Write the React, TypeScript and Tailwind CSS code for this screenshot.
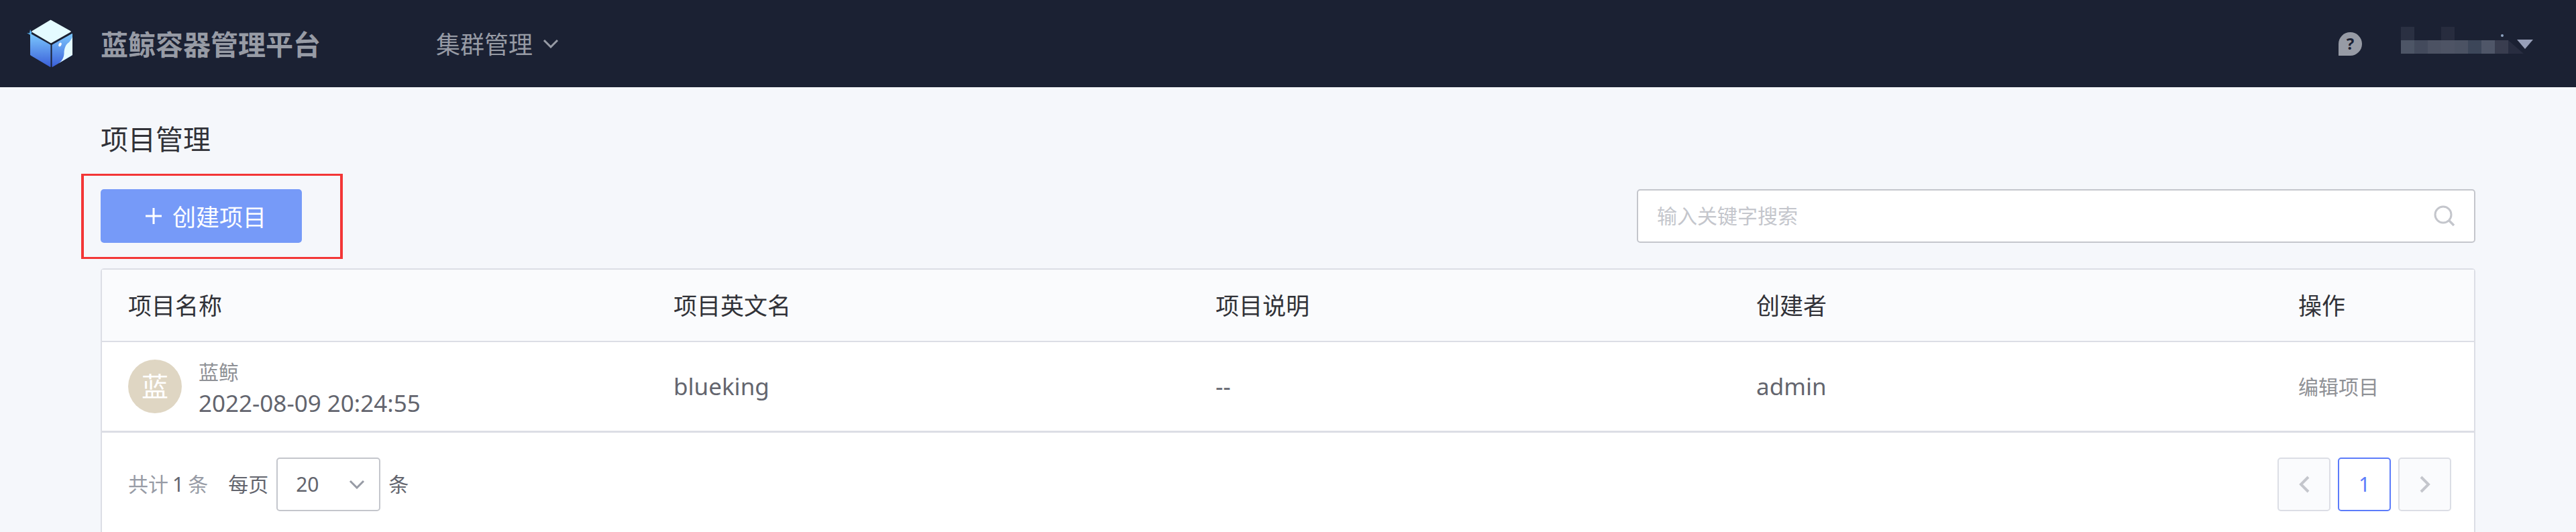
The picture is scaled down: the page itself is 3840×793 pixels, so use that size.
const sans = 'font-["Noto_Sans","Noto_Sans_CJK_SC",sans-serif]';

const blurTop = ['bg-[#2a3042]', 'bg-transparent', 'bg-transparent', 'bg-[#272c3e]'];
const blurBottom = [
  'w-[20px] bg-[#4d5566]',
  'w-[20px] bg-[#434a5c]',
  'w-[20px] bg-[#4c5263]',
  'w-[20px] bg-[#4e5465]',
  'w-[20px] bg-[#4b5263]',
  'w-[20px] bg-[#3c4659]',
  'w-[20px] bg-[#4f5668]',
  'w-[20px] bg-[#393d4f]',
  'w-[23px] bg-[#282d40] [clip-path:polygon(0_0,100%_100%,0_100%)]',
];

const columns = [
  { title: '项目名称', width: 'w-[813px]' },
  { title: '项目英文名', width: 'w-[808px]' },
  { title: '项目说明', width: 'w-[806px]' },
  { title: '创建者', width: 'w-[808px]' },
  { title: '操作', width: 'flex-1' },
];

const Logo = () => (
  <svg width="70" height="74" viewBox="40 28 70 74" className="shrink-0">
    <defs>
      <linearGradient id="face" gradientUnits="userSpaceOnUse" x1="0" y1="50" x2="0" y2="100">
        <stop offset="0%" stopColor="#7cc8fd" />
        <stop offset="100%" stopColor="#3a5fd9" />
      </linearGradient>
    </defs>
    <path d="M75.5 30.5 L105 47 L76 63.5 L48 47 Z" fill="#e4fbff" stroke="#e4fbff" strokeWidth="1.5" strokeLinejoin="round" />
    <path d="M45.5 50.5 L75 67 L75 99.5 L45.5 82 Z" fill="url(#face)" stroke="url(#face)" strokeWidth="1" strokeLinejoin="round" />
    <path d="M78 67 L107.5 50.5 L107.5 82 L78 99.5 Z" fill="url(#face)" stroke="url(#face)" strokeWidth="1" strokeLinejoin="round" />
    <path d="M108 55 L108 82 L88 94 C93 90 95 86 95.5 80 C95.5 72 98 66 103 63 C105 60 107 58 108 55 Z" fill="#e4fbff" />
    <ellipse cx="89.5" cy="66.5" rx="2" ry="3" fill="#ffffff" transform="rotate(25 89.5 66.5)" />
    <path d="M40 49 L44 49.5 L45 44 L47.5 49 L45 52 Z" fill="#5cb4f2" />
  </svg>
);

export default function App() {
  return (
    <div className={`h-[793px] overflow-hidden bg-[#f5f7fb] ${sans}`}>
      {/* header */}
      <header className="flex h-[130px] items-center bg-[#1b2133] pl-[40px] pr-[64px]">
        <Logo />
        <div className="mt-[3px] ml-[40px] w-[500px] text-[41px] leading-none font-bold text-[#979ba5]">蓝鲸容器管理平台</div>
        <div className="mt-[3px] flex items-center text-[36px] leading-none text-[#979ba5]">
          集群管理
          <svg width="24" height="14" viewBox="0 0 24 14" className="mt-[-3px] ml-[15px]">
            <path d="M2 2 L12 12 L22 2" fill="none" stroke="#979ba5" strokeWidth="3" />
          </svg>
        </div>
        <div className="ml-auto flex items-center">
          <div className="flex h-[35px] w-[35px] items-center justify-center rounded-full rounded-bl-none bg-[#979ba5] text-[24px] leading-none font-bold text-[#1b2133]">
            ?
          </div>
          <div className="relative mt-[-10px] ml-[58px] w-[180px]">
            <div className="flex h-[20px]">
              {blurTop.map((c, i) => (
                <div key={i} className={`h-[20px] w-[20px] ${c}`} />
              ))}
            </div>
            <div className="flex h-[20px]">
              {blurBottom.map((c, i) => (
                <div key={i} className={`h-[20px] shrink-0 ${c}`} />
              ))}
            </div>
            <div className="absolute top-[11px] left-[149px] h-[4px] w-[4px] rounded-full bg-[#8ea3c0]" />
          </div>
          <div className="relative mt-[2px] ml-[-7px] h-0 w-0 border-x-[12px] border-t-[14px] border-x-transparent border-t-[#979fb8]" />
        </div>
      </header>

      <main className="px-[150px]">
        <h1 className="pt-[49px] text-[41px] leading-[56px] font-normal text-[#313238]">项目管理</h1>

        {/* toolbar */}
        <div className="mt-[47px] flex items-center justify-between">
          <div className="relative">
            <button className="flex h-[80px] w-[300px] items-center justify-center rounded-[5px] bg-[#769af8] pl-[13px] text-[35px] leading-none text-white">
              <svg width="26" height="26" viewBox="0 0 26 26" className="mr-[15px]">
                <path d="M13 1 V25 M1 13 H25" stroke="#ffffff" strokeWidth="3" />
              </svg>
              <span className="pt-[3px]">创建项目</span>
            </button>
            <div className="absolute top-[-23px] left-[-29px] h-[127px] w-[390px] border-x-[4px] border-y-[3px] border-[#f33636]" />
          </div>
          <div className="flex h-[80px] w-[1250px] items-center justify-between rounded-[5px] border-[2px] border-[#c4c6cc] bg-white pr-[28px] pl-[28px]">
            <span className="text-[30px] leading-none text-[#c4c6cc]">输入关键字搜索</span>
            <svg width="32" height="32" viewBox="0 0 32 32">
              <circle cx="14" cy="14" r="12" fill="none" stroke="#c4c6cc" strokeWidth="3" />
              <path d="M22.5 22.5 L30 30" stroke="#c4c6cc" strokeWidth="3.5" />
            </svg>
          </div>
        </div>

        {/* table */}
        <div className="mt-[38px] h-[500px] rounded-t-[5px] border-x-[2px] border-t-[2px] border-[#dcdee5] bg-white">
          <div className="flex h-[108px] items-center border-b-[2px] border-[#dcdee5] bg-[#fafbfd] text-[35px] leading-none text-[#313238]">
            {columns.map((c) => (
              <div key={c.title} className={`${c.width} pl-[39px]`}>
                {c.title}
              </div>
            ))}
          </div>
          <div className="flex h-[135px] items-center border-b-[3px] border-[#dcdee5] text-[35px] text-[#63656e]">
            <div className="flex w-[813px] items-center pl-[39px]">
              <div className="flex h-[80px] w-[80px] items-center justify-center rounded-full bg-[#dfd6c3] text-[40px] leading-none text-white">
                蓝
              </div>
              <div className="mt-[8px] ml-[25px]">
                <div className="text-[30px] leading-[42px] text-[#8f9196]">蓝鲸</div>
                <div className="text-[35px] leading-[50px]">2022-08-09 20:24:55</div>
              </div>
            </div>
            <div className="w-[808px] pl-[39px]">blueking</div>
            <div className="w-[806px] pl-[39px]">--</div>
            <div className="w-[808px] pl-[39px]">admin</div>
            <div className="flex-1 pl-[39px] text-[30px] text-[#8f9196]">编辑项目</div>
          </div>

          {/* pagination */}
          <div className="flex items-center justify-between pt-[37px] pr-[34px] pl-[39px]">
            <div className="flex items-center text-[30px] leading-none text-[#63656e]">
              <span className="text-[#979ba5]">共计</span>
              <span className="mx-[6px]">1</span>
              <span className="text-[#979ba5]">条</span>
              <span className="ml-[30px]">每页</span>
              <div className="mx-[12px] flex h-[80px] w-[155px] items-center justify-between rounded-[5px] border-[2px] border-[#c4c6cc] pr-[21px] pl-[27px]">
                20
                <svg width="24" height="14" viewBox="0 0 24 14">
                  <path d="M2 2 L12 12 L22 2" fill="none" stroke="#979ba5" strokeWidth="3" />
                </svg>
              </div>
              <span>条</span>
            </div>
            <div className="flex gap-[11px]">
              <div className="flex h-[80px] w-[79px] items-center justify-center rounded-[5px] border-[2px] border-[#dcdee5] bg-[#fafbfd]">
                <svg width="16" height="26" viewBox="0 0 16 26">
                  <path d="M14 2 L3 13 L14 24" fill="none" stroke="#c4c6cc" strokeWidth="4" />
                </svg>
              </div>
              <div className="flex h-[80px] w-[79px] items-center justify-center rounded-[5px] border-[2px] border-[#5c7cfa] bg-white text-[30px] leading-none text-[#5c7cfa]">
                1
              </div>
              <div className="flex h-[80px] w-[79px] items-center justify-center rounded-[5px] border-[2px] border-[#dcdee5] bg-[#fafbfd]">
                <svg width="16" height="26" viewBox="0 0 16 26">
                  <path d="M2 2 L13 13 L2 24" fill="none" stroke="#c4c6cc" strokeWidth="4" />
                </svg>
              </div>
            </div>
          </div>
        </div>
      </main>
    </div>
  );
}
